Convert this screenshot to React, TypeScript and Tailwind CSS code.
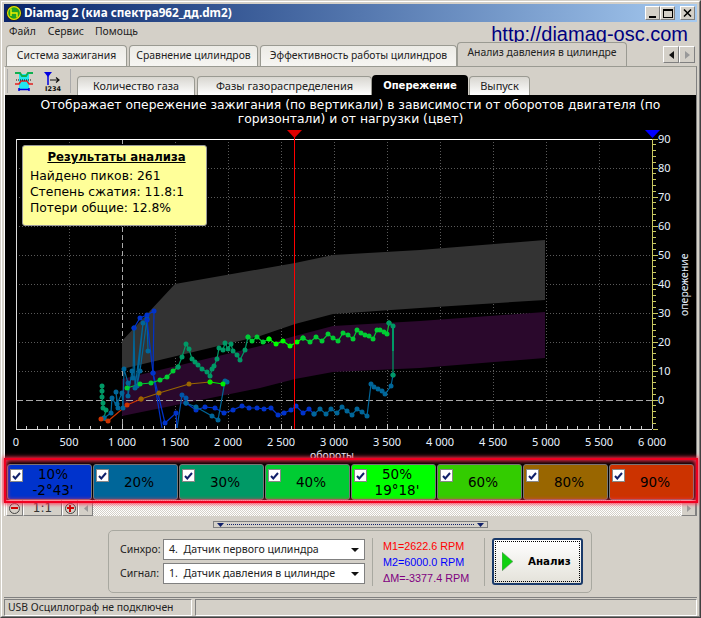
import { ReactNode } from "react";

const UI = "font-['Noto_Sans',sans-serif]";
const WIDE = "font-['DejaVu_Sans',sans-serif]";

type Pt = [number, number];

const traces: { color: string; pts: Pt[] }[] = [
  // left cluster, 800-1000 rpm
  { color: "#009966", pts: [[102, 385], [102, 390], [102, 396], [103, 402], [103, 407], [106, 409], [104, 417]] },
  { color: "#006699", pts: [[104, 417], [111, 412], [112, 397], [118, 407], [116, 391], [117, 403], [122, 392], [123, 407], [124, 368], [128, 382], [128, 395], [132, 370], [133, 377], [134, 327], [135, 387], [143, 322], [137, 385], [140, 370], [147, 318], [148, 350]] },
  { color: "#0033cc", pts: [[134, 327], [140, 317], [147, 314], [154, 310], [153, 372], [165, 422], [176, 412], [177, 427]] },
  { color: "#0033cc", pts: [[147, 319], [153, 372], [162, 427]] },
  { color: "#0055aa", pts: [[177, 427], [182, 394], [186, 397], [186, 402]] },
  { color: "#0033cc", pts: [[186, 402], [196, 409], [205, 406], [215, 407], [224, 412], [233, 409], [242, 405], [249, 407], [257, 407], [264, 408], [271, 407], [278, 414], [284, 412], [291, 409], [296, 405], [303, 412], [309, 408], [314, 413]] },
  { color: "#006699", pts: [[186, 402], [196, 406], [212, 415], [218, 419], [225, 380], [227, 381]] },
  { color: "#006699", pts: [[314, 413], [320, 408], [326, 413], [331, 408], [337, 412], [342, 406], [347, 410], [352, 414], [357, 408], [362, 411], [367, 415], [371, 383], [374, 386], [378, 388], [382, 390], [385, 393], [391, 385], [393, 374]] },
  { color: "#00cc33", pts: [[127, 387], [140, 383], [151, 382], [160, 379], [167, 376], [173, 370], [178, 366]] },
  { color: "#009966", pts: [[178, 366], [182, 356], [186, 343], [189, 348], [192, 358], [195, 361], [198, 364], [202, 368], [207, 371], [210, 375], [212, 368], [214, 365], [217, 358], [219, 347], [223, 349], [225, 342], [228, 348], [231, 343], [233, 350], [237, 354], [240, 359], [245, 349], [248, 336]] },
  { color: "#00cc33", pts: [[248, 336], [252, 340], [257, 336], [263, 341], [269, 338]] },
  { color: "#00ff00", pts: [[269, 338], [276, 343], [283, 340], [290, 345], [297, 341], [303, 337]] },
  { color: "#00cc33", pts: [[303, 337], [310, 341], [316, 336], [322, 340], [328, 333], [333, 337], [338, 340], [343, 332], [348, 334], [353, 338], [357, 329], [361, 332], [365, 334], [369, 335], [373, 338], [377, 329], [380, 329], [384, 331], [387, 333], [389, 322]] },
  { color: "#cc3300", pts: [[101, 418], [108, 420], [127, 404], [141, 398]] },
  { color: "#996600", pts: [[141, 398], [159, 392], [189, 383], [210, 381]] },
  { color: "#00ee00", pts: [[210, 381], [223, 383]] },
  { color: "#009966", pts: [[389, 322], [393, 325], [393, 374]] },
];

const legend = [
  { label: "10%", value: "-2°43'", bg: "bg-[#0033cc]" },
  { label: "20%", bg: "bg-[#006699]" },
  { label: "30%", bg: "bg-[#009966]" },
  { label: "40%", bg: "bg-[#00cc33]" },
  { label: "50%", value: "19°18'", bg: "bg-[#00ff00]" },
  { label: "60%", bg: "bg-[#33cc00]" },
  { label: "80%", bg: "bg-[#996600]" },
  { label: "90%", bg: "bg-[#cc3300]" },
];

const rpmX = (r: number) => 16 + r * 0.106;
const degY = (d: number) => 399 - d * 2.9;

function Chart() {
  const rpms = Array.from({ length: 13 }, (_, i) => i * 500);
  const minor = Array.from({ length: 61 }, (_, i) => i * 100);
  const degs = Array.from({ length: 10 }, (_, i) => i * 10);
  const degTicks = Array.from({ length: 51 }, (_, i) => i * 2 - 10);
  return (
    <svg viewBox="5 121 690 337" className="block w-[690px] h-[337px]">
      {rpms.slice(1, 12).map((r) =>
        r === 1000 ? null : (
          <line key={r} x1={rpmX(r)} x2={rpmX(r)} y1={138} y2={428} stroke="#5a5a5a" strokeDasharray="1 2" shapeRendering="crispEdges" />
        )
      )}
      {degs.slice(1, 9).map((d) => (
        <line key={d} x1={16} x2={652} y1={degY(d)} y2={degY(d)} stroke="#5a5a5a" strokeDasharray="1 2" shapeRendering="crispEdges" />
      ))}
      <line x1={122} x2={122} y1={138} y2={428} stroke="#aaa" strokeDasharray="5 3" shapeRendering="crispEdges" />
      <polygon points="122,340 175,283 295,262 333,254 420,249 545,239 545,299 420,307 333,313 295,323 260,335 122,368" fill="#333333" />
      <polygon points="122,378 260,345 295,335 333,325 420,320 545,311 545,357 420,367 333,371 295,378 260,387 122,415" fill="#2a082c" />
      <line x1={16} x2={652} y1={399} y2={399} stroke="#aaa" strokeDasharray="7 3" shapeRendering="crispEdges" />

      {traces.map((t, i) => (
        <polyline key={i} points={t.pts.map((p) => p.join(",")).join(" ")} fill="none" stroke={t.color} strokeWidth={1.2} />
      ))}
      <line x1={393} x2={393} y1={325} y2={350} stroke="#009966" strokeWidth={2} />
      {traces.map((t, i) =>
        t.pts.map((p, j) =>
          p[1] < 425 ? <circle key={`${i}-${j}`} cx={p[0]} cy={p[1]} r={2.5} fill={t.color} /> : null
        )
      )}

      <line x1={16} x2={652} y1={138} y2={138} stroke="#fff" shapeRendering="crispEdges" />
      <line x1={16} x2={16} y1={138} y2={428} stroke="#ddd" shapeRendering="crispEdges" />
      <line x1={16} x2={652} y1={428} y2={428} stroke="#ddd" shapeRendering="crispEdges" />
      <line x1={652.5} x2={652.5} y1={138} y2={428} stroke="#c8c860" shapeRendering="crispEdges" />
      {minor.map((r) => (
        <line key={r} x1={rpmX(r)} x2={rpmX(r)} y1={r % 500 === 0 ? 423 : 425} y2={428} stroke="#ccc" shapeRendering="crispEdges" />
      ))}
      {degTicks.map((d) => (
        <line key={d} x1={653} x2={d % 10 === 0 ? 658 : 656} y1={degY(d)} y2={degY(d)} stroke="#c8c860" shapeRendering="crispEdges" />
      ))}
      {rpms.map((r) => (
        <text key={r} x={rpmX(r)} y={445} textAnchor="middle" fill="#e8f2ff" fontSize={11} fontFamily="Noto Sans">
          {r === 0 ? "0" : `${Math.floor(r / 1000) || ""} ${String(r % 1000).padStart(3, "0")}`.trim()}
        </text>
      ))}
      {degs.map((d) => (
        <text key={d} x={658} y={degY(d) + 4} fill="#e8f2ff" fontSize={11} fontFamily="Noto Sans">
          {d}
        </text>
      ))}
      <text x={332} y={458} textAnchor="middle" fill="#e8f2ff" fontSize={10.5} fontFamily="Noto Sans">
        обороты
      </text>
      <text transform="translate(688 315) rotate(-90)" fill="#e8f2ff" fontSize={10.5} fontFamily="Noto Sans">
        опережение
      </text>

      <line x1={294.5} x2={294.5} y1={130} y2={428} stroke="#ff0000" shapeRendering="crispEdges" />
      <polygon points="287,129 302,129 294.5,137" fill="#e00000" />
      <polygon points="645,129 660,129 652.5,137" fill="#0000ff" />
    </svg>
  );
}

function Tab({ children, className = "" }: { children: ReactNode; className?: string }) {
  return (
    <div className={`flex items-center justify-center rounded-t-[4px] border border-b-0 border-[#9a9a92] text-[#222] whitespace-nowrap ${className}`}>
      {children}
    </div>
  );
}

function Raised({ children, className = "" }: { children?: ReactNode; className?: string }) {
  return (
    <div className={`flex items-center justify-center bg-[#d4d0c8] border border-t-white border-l-white border-r-[#808080] border-b-[#808080] ${className}`}>
      {children}
    </div>
  );
}

function WinButton({ children }: { children: ReactNode }) {
  return <Raised className="w-[15px] h-[14px] text-black">{children}</Raised>;
}

function Combo({ text }: { text: string }) {
  return (
    <div className="flex items-center justify-between w-[202px] h-[21px] bg-white border border-[#808080] pl-[5px] pr-[4px] text-[10.6px] text-[#222] whitespace-pre">
      <span>{text}</span>
      <svg width="8" height="4" viewBox="0 0 8 4" className="mr-[1px]">
        <polygon points="0,0 8,0 4,4" fill="#111" />
      </svg>
    </div>
  );
}

function Check() {
  return (
    <div className="absolute left-[2px] top-[4px] w-[13px] h-[13px] bg-white border border-[#888] flex items-center justify-center">
      <svg width="9" height="8" viewBox="0 0 9 8">
        <path d="M1 4 L3.3 6.5 L8 1" stroke="#10206a" strokeWidth="2" fill="none" />
      </svg>
    </div>
  );
}

export default function App() {
  return (
    <div className={`w-[701px] h-[618px] flex flex-col bg-[#d4d0c8] border-[1px] border-t-[#d4d0c8] border-l-[#d4d0c8] border-r-[#404040] border-b-[#404040] overflow-hidden ${UI}`}>
      <div className="flex flex-col h-[616px] border border-white border-r-[#808080] border-b-[#808080] px-[2px] pt-[2px] relative">
        {/* title bar */}
        <div className="flex items-center h-[18px] shrink-0 bg-gradient-to-r from-[#0a246a] to-[#a6caf0] pl-[2px] pr-[2px]">
          <svg width="16" height="16" viewBox="0 0 16 16">
            <circle cx="8" cy="8" r="7.8" fill="#222" />
            <circle cx="8" cy="8" r="6.4" fill="#22a022" stroke="#e8e000" strokeWidth="1.2" />
            <path d="M5 3.5 V11 M5 8 H11 V12.5" stroke="#f0f000" strokeWidth="1.4" fill="none" />
          </svg>
          <span className="ml-[2px] text-[11.7px] font-bold text-white whitespace-nowrap">Diamag 2 (киа спектра962_дд.dm2)</span>
          <div className="ml-auto flex">
            <WinButton>
              <div className="w-[7px] h-[2px] bg-black mt-[7px]" />
            </WinButton>
            <WinButton>
              <div className="w-[10px] h-[9px] border border-t-2 border-black" />
            </WinButton>
            <div className="w-[5px]" />
            <WinButton>
              <svg width="9" height="8" viewBox="0 0 9 8">
                <path d="M1 0.5 L8 7.5 M8 0.5 L1 7.5" stroke="#000" strokeWidth="1.5" />
              </svg>
            </WinButton>
          </div>
        </div>

        {/* menu */}
        <div className="flex items-center h-[20px] shrink-0 pl-[5px] pr-[9px] text-[10.4px] text-[#222]">
          <span className="mr-[12px]">Файл</span>
          <span className="mr-[11px]">Сервис</span>
          <span>Помощь</span>
          <span className="ml-auto font-['Liberation_Sans',sans-serif] text-[20px] leading-[20px] text-[#000080] mt-[3px]">http://diamag-osc.com</span>
        </div>

        {/* main tabs */}
        <div className="flex items-end h-[24px] shrink-0 pl-[2px] gap-[2px] text-[10.4px]">
          <Tab className="w-[121px] h-[21px] bg-gradient-to-b from-[#ecebe6] to-[#f6f5f2]">Система зажигания</Tab>
          <Tab className="w-[129px] h-[21px] bg-gradient-to-b from-[#ecebe6] to-[#f6f5f2]">Сравнение цилиндров</Tab>
          <Tab className="w-[197px] h-[21px] bg-gradient-to-b from-[#ecebe6] to-[#f6f5f2]">Эффективность работы цилиндров</Tab>
          <Tab className="-ml-[2px] w-[170px] h-[24px] bg-[#d4d0c8] pb-[3px]">Анализ давления в цилиндре</Tab>
          <div className="ml-auto mr-[2px] mb-[3px] flex w-[32px] h-[17px]">
            <Raised className="flex-1">
              <svg width="5" height="8" viewBox="0 0 5 8"><polygon points="5,0 5,8 0,4" fill="#111" /></svg>
            </Raised>
            <Raised className="flex-1">
              <svg width="5" height="8" viewBox="0 0 5 8"><polygon points="0,0 0,8 5,4" fill="#999" /></svg>
            </Raised>
          </div>
        </div>

        {/* tab content */}
        <div className="flex flex-col shrink-0 border-t border-l border-r border-t-[#9a9a92] border-l-[#fff] border-r-[#808080]">
          {/* toolbar */}
          <div className="flex items-end h-[28px] shrink-0 pl-[2px] text-[11px]">
            <div className="flex items-center self-center h-[24px] w-[64px] border-l border-r border-l-[#aaa] border-r-[#aaa] pl-[6px] gap-[9px]">
              <svg width="20" height="21" viewBox="0 0 20 21">
                <rect x="5" y="3" width="10" height="16" fill="#22e6f0" />
                <path d="M1 2 L6 2 L8 5 L12 5 L14 2 L19 2" stroke="#10b050" strokeWidth="2" fill="none" />
                <path d="M1 13 L5 13 L7 10 L13 10 L15 13 L19 13" stroke="#e02020" strokeWidth="1.5" fill="none" />
                <path d="M2 9 H18" stroke="#111" strokeWidth="1" strokeDasharray="1 1" />
                <path d="M5 17 V20 M15 17 V20 M5 18.5 H15" stroke="#0000e0" strokeWidth="1.5" />
              </svg>
              <svg width="20" height="21" viewBox="0 0 20 21">
                <polygon points="1,1 9,1 5,6" fill="#0000e0" />
                <path d="M5 5 V14" stroke="#0000e0" strokeWidth="1.5" />
                <path d="M7 9 H16 M13 6.5 L16 9 L13 11.5" stroke="#111" strokeWidth="1.2" fill="none" />
                <text x="2" y="20" fontSize="6.5" fontWeight="700" fill="#111" fontFamily="DejaVu Sans">I234</text>
              </svg>
            </div>
            <div className="flex items-end ml-[6px] gap-[2px] h-[20px]">
              <Tab className="w-[118px] h-[19px] bg-gradient-to-b from-[#d8d6d0] to-[#ffffff] text-[10.8px]">Количество газа</Tab>
              <Tab className="w-[175px] h-[19px] bg-gradient-to-b from-[#d8d6d0] to-[#ffffff]">Фазы газораспределения</Tab>
              <div className={`-ml-[2px] flex items-center justify-center w-[96px] h-[20px] rounded-t-[4px] bg-black text-white text-[10px] font-bold ${WIDE}`}>Опережение</div>
              <Tab className="-ml-[1px] w-[61px] h-[19px] bg-gradient-to-b from-[#d8d6d0] to-[#ffffff]">Выпуск</Tab>
            </div>
          </div>

          {/* black plot area */}
          <div className="relative bg-black h-[405px] shrink-0">
            <div className={`h-[27px] pt-[3px] text-center text-white text-[12.35px] leading-[14px] px-[30px] ${WIDE}`}>
              Отображает опережение зажигания (по вертикали) в зависимости от оборотов двигателя (по горизонтали) и от нагрузки (цвет)
            </div>
            <div className="relative h-[337px]">
              <Chart />
              <div className={`absolute left-[17px] top-[23px] w-[185px] h-[81px] rounded-[3px] bg-[#ffff99] border border-[#999] pl-[7px] pt-[3px] text-[12.35px] leading-[16px] text-black ${WIDE}`}>
                <div className="text-center text-[11.7px] font-bold underline mb-[3px] pr-[3px]">Результаты анализа</div>
                <div>Найдено пиков: 261</div>
                <div>Степень сжатия: 11.8:1</div>
                <div>Потери общие: 12.8%</div>
              </div>
            </div>
            <div className="grid grid-cols-8 gap-[1px] px-[2px] pt-[5px] h-[41px]">
              {legend.map((l) => (
                <div key={l.label} className={`relative flex flex-col items-center justify-center h-[36px] rounded-[3px] border border-[#777] pl-[7px] text-black text-[13.5px] leading-[16px] ${WIDE} ${l.bg}`}>
                  <Check />
                  <span>{l.label}</span>
                  {l.value && <span>{l.value}</span>}
                </div>
              ))}
            </div>
          </div>

          {/* zoom scroll row */}
          <div className="flex h-[16px] shrink-0">
            <Raised className="w-[17px] ml-[1px]">
              <div className="w-[11px] h-[11px] rounded-full border border-[#444] flex items-center justify-center">
                <div className="w-[7px] h-[2px] bg-[#d00000]" />
              </div>
            </Raised>
            <Raised className={`w-[39px] text-[12px] text-[#333] ${WIDE}`}>1:1</Raised>
            <Raised className="w-[16px]">
              <div className="relative w-[11px] h-[11px] rounded-full border border-[#444] flex items-center justify-center">
                <div className="w-[7px] h-[2px] bg-[#d00000]" />
                <div className="absolute w-[2px] h-[7px] bg-[#d00000]" />
              </div>
            </Raised>
            <Raised className="w-[15px]">
              <svg width="4" height="7" viewBox="0 0 4 7"><polygon points="4,0 4,7 0,3.5" fill="#999" /></svg>
            </Raised>
            <div className="flex-1 bg-[repeating-conic-gradient(#d4d0c8_0_25%,#ffffff_0_50%)] bg-[length:2px_2px]" />
            <Raised className="w-[15px]">
              <svg width="4" height="7" viewBox="0 0 4 7"><polygon points="0,0 0,7 4,3.5" fill="#999" /></svg>
            </Raised>
          </div>
        </div>

        {/* splitter */}
        <div className="flex justify-center pt-[5px] h-[13px] shrink-0">
          <div className="flex items-center justify-between w-[275px] h-[7px] border border-[#808080] px-[3px]">
            <svg width="7" height="4" viewBox="0 0 7 4"><polygon points="0,0 7,0 3.5,4" fill="#10206a" /></svg>
            <div className="flex-1 mx-[3px] border-t border-dotted border-[#10206a]" />
            <svg width="7" height="4" viewBox="0 0 7 4"><polygon points="0,0 7,0 3.5,4" fill="#10206a" /></svg>
          </div>
        </div>

        {/* control group */}
        <div className="flex items-center self-center w-[484px] h-[63px] shrink-0 rounded-[5px] border border-[#a8a8a0] mt-[1px] ml-[-1px]">
          <div className="flex flex-col gap-[3px] ml-[11px] w-[245px]">
            <div className="flex items-center">
              <span className="w-[43px] text-[10.5px] text-[#222] whitespace-nowrap">Синхро:</span>
              <Combo text="4.  Датчик первого цилиндра" />
            </div>
            <div className="flex items-center">
              <span className="w-[43px] text-[10.5px] text-[#222] whitespace-nowrap">Сигнал:</span>
              <Combo text="1.  Датчик давления в цилиндре" />
            </div>
          </div>
          <div className="ml-[7px] w-[2px] h-[48px] border-l border-[#a8a8a0]" />
          <div className="flex flex-col ml-[9px] w-[101px] font-['Liberation_Sans',sans-serif] text-[10.8px] leading-[16px] whitespace-nowrap">
            <span className="text-[#ff0000]">M1=2622.6 RPM</span>
            <span className="text-[#0000ff]">M2=6000.0 RPM</span>
            <span className="text-[#800080]">ΔM=-3377.4 RPM</span>
          </div>
          <div className="w-[2px] h-[48px] border-l border-[#a8a8a0]" />
          <div className="ml-[6px] w-[91px] h-[47px] rounded-[3px] border-2 border-[#1a3a6a] p-[1px] bg-gradient-to-b from-white to-[#e4e2da]">
            <div className="flex items-center w-full h-full border border-dotted border-black">
              <svg width="11" height="19" viewBox="0 0 11 19" className="ml-[6px]">
                <polygon points="0,0 11,9.5 0,19" fill="#10d010" stroke="#888" strokeWidth="0.5" />
              </svg>
              <span className={`ml-[15px] text-[10.3px] font-bold text-black ${WIDE}`}>Анализ</span>
            </div>
          </div>
        </div>

        {/* status bar */}
        <div className="flex gap-[3px] h-[19px] mt-[4px] shrink-0 pt-[1px] border-t border-[#808080] text-[10.4px] text-[#222]">
          <div className="flex items-center w-[188px] h-[17px] border border-t-[#808080] border-l-[#808080] border-r-white border-b-white pl-[3px] whitespace-nowrap">
            USB Осциллограф не подключен
          </div>
          <div className="flex-1 h-[17px] border border-t-[#808080] border-l-[#808080] border-r-white border-b-white" />
        </div>

        {/* red selection frame */}
        <div className="absolute left-[2px] right-[1px] top-[456px] h-[45px] border-2 border-[#f00020] shadow-[0_0_4px_1px_#ff3050,inset_0_0_4px_1px_#ff3050] pointer-events-none" />
      </div>
    </div>
  );
}
